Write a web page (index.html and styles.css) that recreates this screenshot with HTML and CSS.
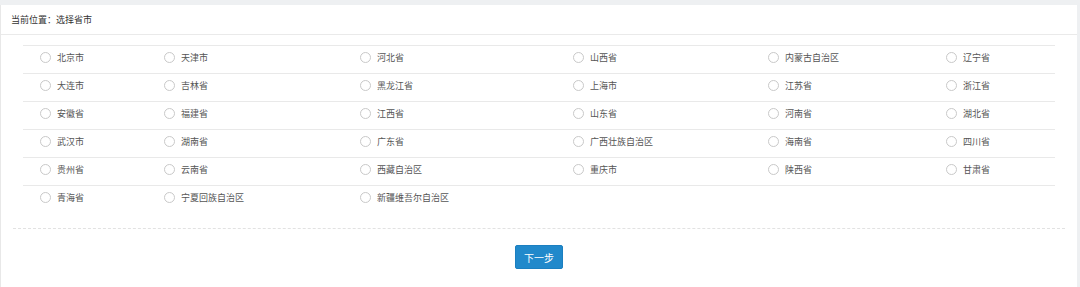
FILE: index.html
```html
<!DOCTYPE html>
<html lang="zh-CN">

<head>
    <meta charset="UTF-8">
    <title>选择省市</title>
    <link rel="stylesheet" href="styles.css">
</head>

<body>
    <div class="panel">
        <div class="panel-heading">当前位置：选择省市</div>
        <div class="panel-body">
            <div class="province-table" id="provinces"></div>
            <div class="actions">
                <button type="button" class="btn-next">下一步</button>
            </div>
        </div>
    </div>

    <script>
        const provinces = [
            "北京市", "天津市", "河北省", "山西省", "内蒙古自治区", "辽宁省",
            "大连市", "吉林省", "黑龙江省", "上海市", "江苏省", "浙江省",
            "安徽省", "福建省", "江西省", "山东省", "河南省", "湖北省",
            "武汉市", "湖南省", "广东省", "广西壮族自治区", "海南省", "四川省",
            "贵州省", "云南省", "西藏自治区", "重庆市", "陕西省", "甘肃省",
            "青海省", "宁夏回族自治区", "新疆维吾尔自治区"
        ];

        const table = document.getElementById('provinces');
        for (let i = 0; i < provinces.length; i += 6) {
            const row = document.createElement('div');
            row.classList.add('row');
            provinces.slice(i, i + 6).forEach(function (name) {
                const cell = document.createElement('label');
                cell.classList.add('cell');
                cell.innerHTML = `
                    <input type="radio" name="province">
                    <span class="radio"></span>
                    <span>${name}</span>
                `;
                row.appendChild(cell);
            });
            table.appendChild(row);
        }
    </script>
</body>

</html>
```

FILE: styles.css
```css
body {
    margin: 0;
    background-color: #eef0f2;
    font-family: 'Noto Sans CJK SC', 'Noto Sans', sans-serif;
    font-size: 9px;
    color: #555;
}

.panel {
    margin: 5px 3px 0 0;
    background-color: #fff;
    border-left: 1px solid #e8e8e8;
    height: 282px;
}

.panel-heading {
    height: 29px;
    line-height: 29px;
    padding-left: 10px;
    border-bottom: 1px solid #eaeaea;
    color: #333;
}

.panel-body {
    padding: 10px 12px 0 12px;
}

.province-table {
    margin: 0 10px;
    border-bottom: 1px dashed #e2e2e2;
    padding-bottom: 15px;
    margin: 0 -0px;
}

.row {
    display: grid;
    grid-template-columns: 124px 196px 213px 195px 178px 1fr;
    height: 27px;
    border-top: 1px solid #e9e9e9;
    margin: 0 10px;
}

.cell {
    display: flex;
    align-items: center;
    height: 13px;
    margin-top: 5px;
    padding-left: 17px;
    line-height: 13px;
    color: #555;
}

.cell input {
    display: none;
}

.radio {
    width: 9px;
    height: 9px;
    border: 1px solid #c9c9c9;
    border-radius: 50%;
    margin-right: 6px;
    background-color: #fff;
}

.cell input:checked + .radio {
    border-color: #2187c9;
    box-shadow: inset 0 0 0 2px #fff;
    background-color: #2187c9;
}

.actions {
    display: flex;
    justify-content: center;
    padding-top: 16px;
}

.btn-next {
    width: 48px;
    height: 24px;
    border: 1px solid #1b7fc0;
    border-radius: 2px;
    background-color: #2189cb;
    color: #fff;
    font-family: inherit;
    font-size: 10px;
    padding: 0;
    cursor: pointer;
}
```
